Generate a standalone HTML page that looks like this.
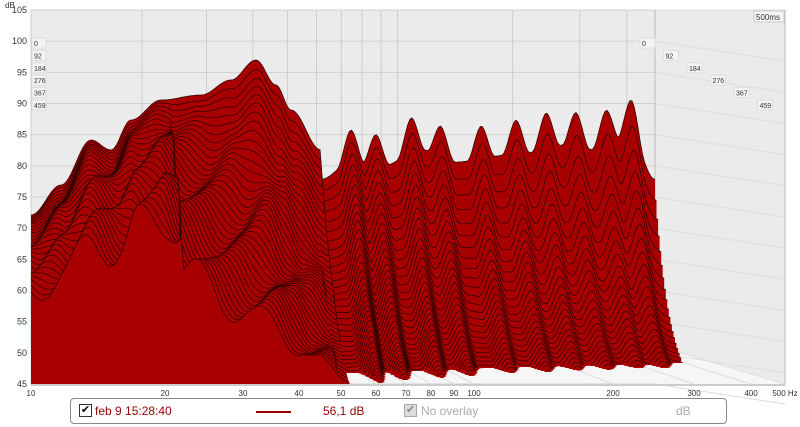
<!DOCTYPE html>
<html><head><meta charset="utf-8"><style>
body{margin:0;width:800px;height:427px;background:#fff;font-family:"Liberation Sans",sans-serif;overflow:hidden;position:relative}
.lg{position:absolute;left:70px;top:398px;width:657px;height:26px;border:1px solid #888;border-radius:4px;box-sizing:border-box;font-size:12px}
.lg span{position:absolute;top:5px}
</style></head><body>
<svg id="s" width="800" height="427" style="position:absolute;left:0;top:0"></svg>
<div class="lg">
<span style="left:8px;top:5px;width:11px;height:11px;border:1px solid #333;background:#fff;font-size:11px;line-height:11px;text-align:center">✔</span>
<span style="left:24px;color:#900">feb 9 15:28:40</span>
<span style="left:185px;top:12px;width:35px;height:2px;background:#900"></span>
<span style="left:252px;color:#900">56,1 dB</span>
<span style="left:333px;width:11px;height:11px;border:1px solid #aaa;background:#ddd;color:#888;font-size:11px;line-height:11px;text-align:center">✔</span>
<span style="left:350px;color:#aaa">No overlay</span>
<span style="left:605px;color:#aaa">dB</span>
</div>
<script>
const s=document.getElementById('s');let h='';
h+='<rect x="31" y="10" width="754" height="374" fill="#ebebeb" stroke="#bbb"/>';
h+='<polygon points="31,345 655,345 785,384 31,384" fill="#f6f6f6"/>';
const fx=[[10,31],[20,165],[30,243],[40,299],[50,341],[60,376],[70,406],[80,431],[90,454],[100,474],[200,613],[300,694],[400,751],[500,785]];
for(const [f,x] of fx){const bx=31+(x-31)*624/754;h+=`<line x1="${bx}" y1="10" x2="${bx}" y2="345" stroke="#ccc"/><line x1="${bx}" y1="345" x2="${x}" y2="384" stroke="#ddd"/>`;}
for(let d=45;d<=105;d+=5){const y=10+(105-d)*6.233;h+=`<line x1="31" y1="${y}" x2="655" y2="${y}" stroke="#d0d0d0"/><line x1="655" y1="${y}" x2="785" y2="${y+(y>10?20:0)}" stroke="#ddd"/>`;h+=`<text x="27" y="${y+3}" font-size="9" text-anchor="end" fill="#333">${d}</text>`;}
h+='<line x1="655" y1="10" x2="655" y2="345" stroke="#bbb"/>';
const N=40;
const pts=[[0,130],[30,160],[60,205],[80,195],[100,225],[130,245],[170,250],[200,265],[225,285],[245,260],[260,235],[290,195],[320,215],[350,210],[390,230],[420,215],[490,225],[530,235],[560,230],[600,245],[624,195],[650,100],[680,0]];
const peaks=[320,345,380,410,450,485,515,545,575,600];
function prof(u){const x=u*624;
 for(let i=0;i<pts.length-1;i++){if(x>=pts[i][0]&&x<=pts[i+1][0]){const t=(x-pts[i][0])/(pts[i+1][0]-pts[i][0]);const tt=(1-Math.cos(t*Math.PI))/2;return pts[i][1]+(pts[i+1][1]-pts[i][1])*tt;}}
 return 0;}
function comb(u,r){const x=u*624;if(x<290)return 1;let m=1e9;for(const p of peaks)m=Math.min(m,Math.abs(x-p));
 const w=Math.min(1,m/14);const depth=0.15+0.55*r;return 1-depth*w*w*(3-2*w);}
for(let k=0;k<N;k++){
 const r=k/(N-1);const x0=31, x1=655+60*r, fl=345+39*r;
 let top=[];
 for(let i=0;i<=300;i++){const u=i/300;const x=x0+(x1-x0)*u;
  const p=prof(u);
  const rate=0.45+6*Math.max(0,u-0.2);
  let v=p*Math.exp(-r*rate*0.8)*comb(u,r)*(1+0.15*r*Math.sin(u*70+k*0.4)*(u<0.45?1:0.3));
  if(u>0.22) v-=r*35;
  v=Math.max(v,0);
  top.push([x,fl-v]);}
 let d=`M${x0},${fl}`;for(const [x,y] of top)d+=` L${x.toFixed(1)},${y.toFixed(1)}`;d+=` L${x1},${fl} Z`;
 h+=`<path d="${d}" fill="#a80000"/>`;
 let sd='';let on=false;
 for(const [x,y] of top){if(fl-y>1){sd+=(on?' L':' M')+x.toFixed(1)+','+y.toFixed(1);on=true;}else on=false;}
 if(sd)h+=`<path d="${sd}" fill="none" stroke="#2a0000" stroke-width="0.7"/>`;
}
const tl=['0','92','184','276','367','459'];
tl.forEach((t,i)=>{h+=`<rect x="32" y="${38+i*12.4}" width="14" height="10" fill="#f4f4f4" stroke="#ddd"/><text x="34" y="${46+i*12.4}" font-size="7" fill="#333">${t}</text>`;
 const rx=640+i*23.5, ry=38+i*12.4;h+=`<rect x="${rx}" y="${ry}" width="15" height="10" fill="#f4f4f4" stroke="#ddd"/><text x="${rx+2}" y="${ry+8}" font-size="7" fill="#333">${t}</text>`;});
h+='<rect x="754" y="11" width="30" height="11" fill="#f4f4f4" stroke="#ccc"/><text x="756" y="20" font-size="8" fill="#333">500ms</text>';
h+='<text x="5" y="8" font-size="8" fill="#333">dB</text>';
h+='<rect x="31" y="384" width="754" height="2" fill="#ccc"/>';
for(const [f,x] of fx){h+=`<text x="${x}" y="396" font-size="8" text-anchor="middle" fill="#333">${f}${f==500?' Hz':''}</text>`;}
s.innerHTML=h;
</script>
</body></html>
